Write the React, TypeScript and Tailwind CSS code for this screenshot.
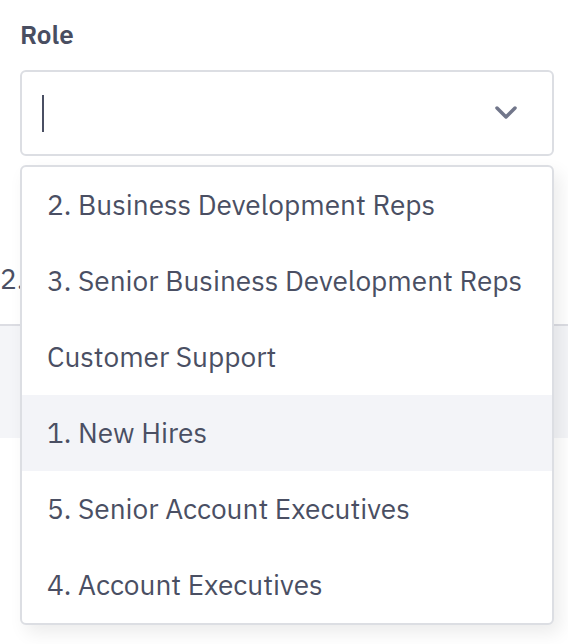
import React from "react";

const items = [
  "2. Business Development Reps",
  "3. Senior Business Development Reps",
  "Customer Support",
  "1. New Hires",
  "5. Senior Account Executives",
  "4. Account Executives",
];

export default function App() {
  return (
    <div className="relative h-[644px] w-[568px] overflow-hidden bg-white font-['IBM_Plex_Sans','Roboto',sans-serif] text-[#4a4f63]">
      <div className="px-[20px] pt-[18px]">
        <label className="block text-[26px] font-semibold leading-[32px] text-[#494e61]">Role</label>
        <div className="mt-[20px] flex h-[86px] w-[534px] items-center justify-between rounded-[6px] border-2 border-[#dcdee3] bg-white pl-[20px] pr-[34px]">
          <span className="block h-[37px] w-[2px] bg-[#4a4f63]" />
          <svg width="24" height="16" viewBox="0 0 24 16" fill="none">
            <polyline points="3,3 12,12 21,3" stroke="#71768a" strokeWidth="3.5" strokeLinecap="round" strokeLinejoin="round" />
          </svg>
        </div>
      </div>
      <div className="mt-[94px] h-[58px] whitespace-nowrap text-[28px] leading-[58px]">2. Business Development Reps</div>
      <div className="mt-[16px] h-[114px] border-t-2 border-[#dcdde3] bg-[#f4f5f8]" />

      <div className="absolute left-[20px] top-[165px] w-[534px] overflow-hidden rounded-[6px] border-2 border-[#dcdee3] bg-white shadow-[6px_8px_18px_rgba(0,0,0,0.08)]">
        {items.map((it) => (
          <div
            key={it}
            className={`flex h-[76px] items-center px-[25px] text-[28px] whitespace-nowrap ${it === "1. New Hires" ? "bg-[#f3f4f8]" : ""}`}
          >
            {it}
          </div>
        ))}
      </div>
    </div>
  );
}
